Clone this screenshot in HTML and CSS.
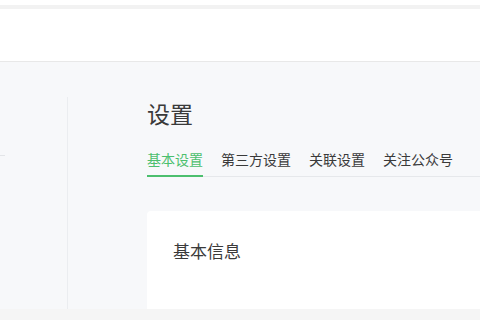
FILE: index.html
```html
<!DOCTYPE html>
<html lang="zh-CN">
<head>
    <meta charset="UTF-8">
    <meta name="viewport" content="width=device-width, initial-scale=1.0">
    <title>设置</title>
    <link rel="stylesheet" href="styles.css">
</head>
<body>
    <div class="frame-top"></div>
    <div class="frame-band"></div>
    <header class="header"></header>
    <div class="main">
      <aside class="sidebar">
        <div class="side-mark"></div>
      </aside>
      <section class="content">
        <h1 class="title">设置</h1>
        <nav class="tabs">
          <span class="tab active">基本设置</span>
          <span class="tab">第三方设置</span>
          <span class="tab">关联设置</span>
          <span class="tab">关注公众号</span>
        </nav>
        <div class="card">
          <h2 class="card-title">基本信息</h2>
        </div>
      </section>
    </div>
    <div class="frame-bottom"></div>
</body>
</html>
```

FILE: styles.css
```css
* {
    margin: 0;
    padding: 0;
    box-sizing: border-box;
}
body {
    width: 480px;
    height: 320px;
    overflow: hidden;
    background: #ffffff;
    font-family: "Noto Sans CJK SC", "Noto Sans", sans-serif;
    color: #333;
}
.frame-top {
    height: 5px;
    background: #ffffff;
}
.frame-band {
    height: 4px;
    background: #f2f2f2;
}
.header {
    height: 53px;
    background: #ffffff;
    border-bottom: 1px solid #e8e8e8;
    box-shadow: 0 1px 2px rgba(0, 0, 0, 0.04);
}
.main {
    height: 247px;
    display: flex;
    background: #f7f8fa;
    overflow: hidden;
}
.sidebar {
    width: 68px;
    flex-shrink: 0;
    margin-top: 35px;
    border-right: 1px solid #ebedf0;
}
.side-mark {
    width: 5px;
    height: 1px;
    margin-top: 58px;
    background: #e3e5e8;
}
.content {
    flex: 1;
    padding: 35px 0 0 79px;
    overflow: hidden;
}
.title {
    font-size: 23px;
    font-weight: normal;
    line-height: 32px;
    color: #3a3a3a;
}
.tabs {
    display: flex;
    gap: 18px;
    margin-top: 20px;
    border-bottom: 1px solid #e6e8eb;
    white-space: nowrap;
}
.tab {
    font-size: 14px;
    line-height: 20px;
    padding-bottom: 6px;
    color: #3a3a3a;
    border-bottom: 2px solid transparent;
    margin-bottom: -1px;
}
.tab.active {
    color: #4cbf6e;
    border-bottom-color: #4cbf6e;
}
.card {
    margin-top: 34px;
    height: 120px;
    background: #ffffff;
    border-radius: 4px 0 0 0;
    padding: 28px 26px;
}
.card-title {
    font-size: 17px;
    font-weight: normal;
    line-height: 24px;
    color: #3a3a3a;
}
.frame-bottom {
    height: 11px;
    background: #f5f5f5;
}
```
